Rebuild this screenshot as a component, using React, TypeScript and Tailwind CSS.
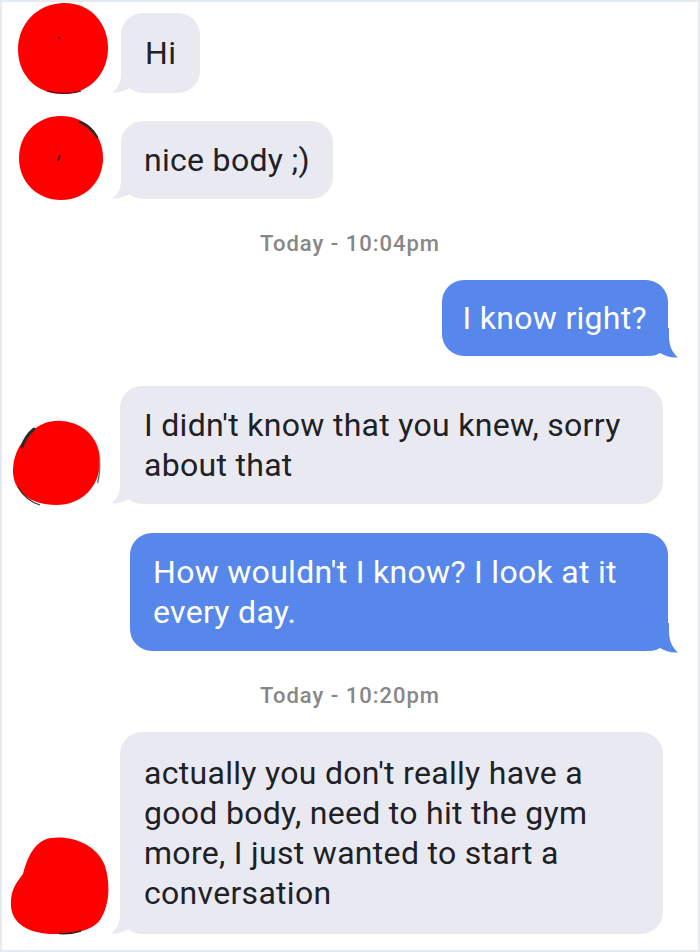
import React from "react";

const FONT = { fontFamily: "Roboto, 'Noto Sans', Arial, sans-serif" };

function GrayTail() {
  return (
    <svg
      className="absolute left-[-10px] bottom-[0px] w-[30px] h-[28px]"
      viewBox="0 0 30 28"
    >
      <path
        d="M30 0 L10 0 L10 8 C10 18 7 23 1 27.5 C8 28 14 26 19 23 C22 26 26 27 30 27 Z"
        fill="#e9eaf1"
      />
    </svg>
  );
}

function BlueTail() {
  return (
    <svg
      className="absolute right-[-11px] bottom-[-2px] w-[30px] h-[30px] -scale-x-100"
      viewBox="0 0 30 30"
    >
      <path
        d="M30 0 L10 0 L10 8 C10 18 7 24 1 29.5 C8 30 14 28 19 25 C22 27 26 28 30 28 Z"
        fill="#5787ea"
      />
    </svg>
  );
}

function GrayBubble({
  children,
  className,
}: {
  children: React.ReactNode;
  className: string;
}) {
  return (
    <div
      className={
        "relative bg-[#e9eaf1] rounded-[22px] text-[32px] leading-[40px] tracking-[0.3px] text-[#1e2125] " +
        className
      }
    >
      <GrayTail />
      <div className="relative">{children}</div>
    </div>
  );
}

function BlueBubble({
  children,
  className,
}: {
  children: React.ReactNode;
  className: string;
}) {
  return (
    <div
      className={
        "relative self-end mr-[32px] bg-[#5787ea] rounded-[22px] text-[32px] leading-[40px] tracking-[0.3px] text-white " +
        className
      }
    >
      <BlueTail />
      <div className="relative">{children}</div>
    </div>
  );
}

function Avatar1() {
  return (
    <svg className="w-[92px] h-[93px] shrink-0 ml-[17px]" viewBox="0 0 92 93">
      <path
        d="M46 1 C72 0 91 20 91 46 C91 72 72 92 46 92 C20 92 1 74 1 47 C1 22 20 2 46 1 Z"
        fill="#ff0000"
      />
      <path
        d="M30 89 C40 92 55 92 64 89"
        stroke="#3a1010"
        strokeWidth="1.2"
        fill="none"
      />
      <circle cx="42" cy="36" r="1.2" fill="#5a1a1a" />
    </svg>
  );
}

function Avatar2() {
  return (
    <svg className="w-[86px] h-[86px] shrink-0 ml-[18px]" viewBox="0 0 86 86">
      <path
        d="M43 1 C67 1 85 19 85 43 C85 67 67 85 43 85 C19 85 1 67 1 43 C1 19 19 1 43 1 Z"
        fill="#ff0000"
      />
      <path
        d="M62 7 C69 10 75 15 79 22"
        stroke="#2a2a2a"
        strokeWidth="2.5"
        fill="none"
        strokeLinecap="round"
      />
      <path d="M42 40 L40 46" stroke="#3a0a0a" strokeWidth="1.6" />
    </svg>
  );
}

function Avatar3() {
  return (
    <svg
      className="w-[90px] h-[87px] shrink-0 ml-[12px] mb-[-2px]"
      viewBox="0 0 90 87"
    >
      <path
        d="M50 2 C74 4 89 22 88 44 C87 68 70 86 44 86 C18 86 0 72 1 50 C2 32 10 22 20 12 C28 5 38 1 50 2 Z"
        fill="#ff0000"
      />
      <path
        d="M22 10 C16 15 12 21 10 28"
        stroke="#2a2a2a"
        strokeWidth="3"
        fill="none"
        strokeLinecap="round"
      />
      <path
        d="M87.5 38 C88 48 88 56 85.5 64"
        stroke="#777"
        strokeWidth="1.5"
        fill="none"
      />
      <path
        d="M6 68 C11 77 18 83 28 86"
        stroke="#333"
        strokeWidth="1.2"
        fill="none"
      />
    </svg>
  );
}

function Avatar4() {
  return (
    <svg
      className="w-[104px] h-[99px] shrink-0 ml-[9px] mb-[-1px]"
      viewBox="0 0 104 99"
    >
      <path
        d="M42 2 C62 -1 88 8 96 30 C102 50 100 70 91 84 C82 96 62 98 42 98 C20 97 3 88 2 70 C1 54 8 46 14 38 C18 22 26 4 42 2 Z"
        fill="#ff0000"
      />
      <path
        d="M50 97.5 C58 98 66 97 72 95"
        stroke="#222"
        strokeWidth="1.5"
        fill="none"
      />
    </svg>
  );
}

function Stamp({ text, className }: { text: string; className: string }) {
  return (
    <div
      className={
        "text-center text-[22px] leading-[28px] font-medium text-[#878787] tracking-[1px] " +
        className
      }
    >
      {text}
    </div>
  );
}

export default function App() {
  return (
    <div
      className="w-[700px] h-[952px] bg-white overflow-hidden shadow-[inset_0_0_0_2px_#e6ebf0] flex flex-col pt-[2px]"
      style={FONT}
    >
      <div className="flex items-end">
        <Avatar1 />
        <GrayBubble className="ml-[12px] mb-[2px] py-[20px] px-[24px]">
          Hi
        </GrayBubble>
      </div>

      <div className="flex items-end mt-[20px]">
        <Avatar2 />
        <GrayBubble className="ml-[17px] mb-[2px] py-[19px] px-[23px]">
          nice body ;)
        </GrayBubble>
      </div>

      <Stamp text="Today - 10:04pm" className="mt-[29px]" />

      <BlueBubble className="mt-[22px] px-[21px] py-[18px]">
        I know right?
      </BlueBubble>

      <div className="flex items-end mt-[30px]">
        <Avatar3 />
        <GrayBubble className="ml-[18px] w-[543px] py-[19px] px-[24px]">
          I didn't know that you knew, sorry
          <br />
          about that
        </GrayBubble>
      </div>

      <BlueBubble className="mt-[29px] w-[538px] pl-[23px] pr-[20px] py-[19px]">
        How wouldn't I know? I look at it
        <br />
        every day.
      </BlueBubble>

      <Stamp text="Today - 10:20pm" className="mt-[31px]" />

      <div className="flex items-end mt-[22px]">
        <Avatar4 />
        <GrayBubble className="ml-[7px] w-[543px] py-[21px] px-[24px]">
          actually you don't really have a
          <br />
          good body, need to hit the gym
          <br />
          more, I just wanted to start a
          <br />
          conversation
        </GrayBubble>
      </div>
    </div>
  );
}
